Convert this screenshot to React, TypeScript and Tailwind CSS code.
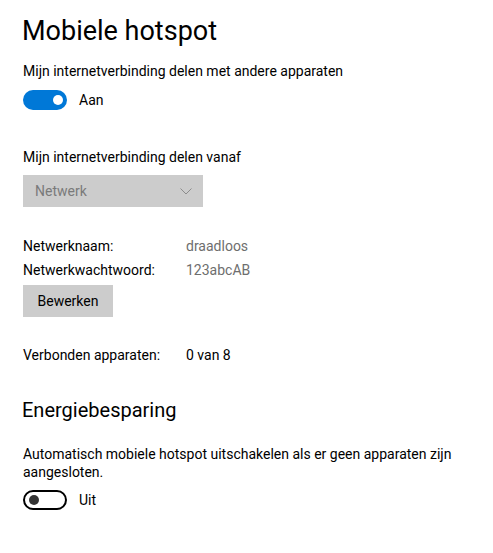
export default function App() {
  return (
    <div
      className="w-[493px] h-[553px] bg-white text-black px-[23px] pt-[11px]"
      style={{ fontFamily: 'Roboto, "Noto Sans", sans-serif' }}
    >
      <h1 className="text-[27px] leading-[40px] -ml-[1px] font-normal">Mobiele hotspot</h1>
      <p className="mt-[10px] text-[14px] leading-[20px]">Mijn internetverbinding delen met andere apparaten</p>
      <div className="mt-[9px] flex items-center h-[20px]">
        <div className="w-[44px] h-[20px] rounded-full bg-[#0078d7] flex items-center justify-end pr-[4px]">
          <div className="w-[10px] h-[10px] rounded-full bg-white" />
        </div>
        <span className="ml-[12px] text-[14px]">Aan</span>
      </div>

      <p className="mt-[37px] text-[14px] leading-[20px]">Mijn internetverbinding delen vanaf</p>
      <div className="mt-[8px] w-[180px] h-[32px] bg-[#cccccc] flex items-center justify-between pl-[12px] pr-[11px]">
        <span className="text-[14px] text-[#7a7a7a]">Netwerk</span>
        <svg width="12" height="7" viewBox="0 0 12 7" fill="none">
          <path d="M0.5 0.5 L6 6 L11.5 0.5" stroke="#8c8c8c" strokeWidth="1" />
        </svg>
      </div>

      <div className="mt-[27px] grid grid-cols-[163px_1fr] text-[14px] leading-[24px]">
        <span>Netwerknaam:</span>
        <span className="text-[#6e6e6e]">draadloos</span>
        <span>Netwerkwachtwoord:</span>
        <span className="text-[#6e6e6e]">123abcAB</span>
      </div>
      <button className="mt-[3px] w-[90px] h-[32px] bg-[#cccccc] text-[14px]">Bewerken</button>

      <div className="mt-[28px] grid grid-cols-[163px_1fr] text-[14px] leading-[20px]">
        <span>Verbonden apparaten:</span>
        <span>0 van 8</span>
      </div>

      <h2 className="mt-[31px] text-[20px] leading-[28px] -ml-[1px] font-normal">Energiebesparing</h2>
      <p className="mt-[21px] text-[14px] leading-[18px] w-[450px]">
        Automatisch mobiele hotspot uitschakelen als er geen apparaten zijn aangesloten.
      </p>
      <div className="mt-[9px] flex items-center h-[20px]">
        <div className="w-[44px] h-[20px] rounded-full border-2 border-black flex items-center pl-[4px]">
          <div className="w-[10px] h-[10px] rounded-full bg-[#333]" />
        </div>
        <span className="ml-[12px] text-[14px]">Uit</span>
      </div>
    </div>
  );
}
